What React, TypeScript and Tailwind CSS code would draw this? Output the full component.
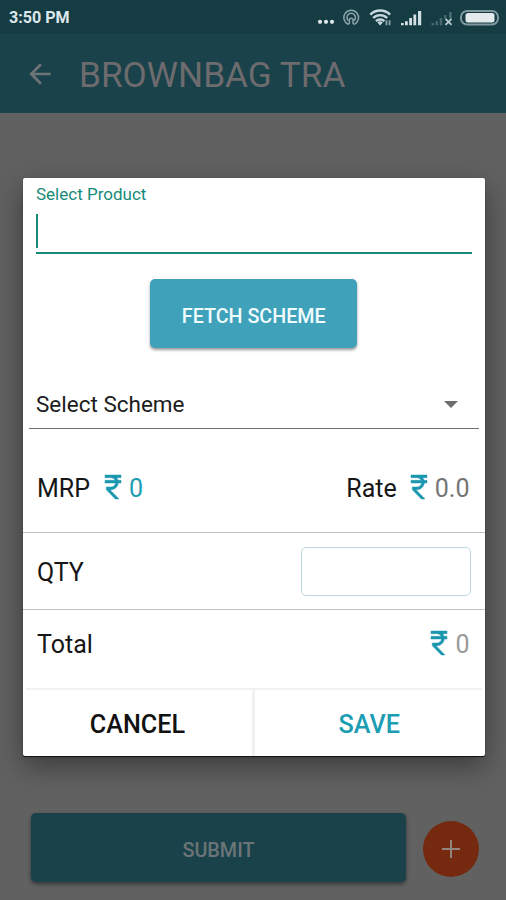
import { useState } from 'react';
import { MdArrowBack } from 'react-icons/md';

function StatusIcons() {
  return (
    <svg width="184" height="36" viewBox="316 0 184 36" fill="none">
      <g fill="#dbe7ea">
        <circle cx="320" cy="22.8" r="2.1" />
        <circle cx="326" cy="22.8" r="2.1" />
        <circle cx="332" cy="22.8" r="2.1" />
      </g>
      {/* hotspot */}
      <g stroke="#8ba5ab" strokeWidth="1.5" transform="translate(0 1)">
        <path d="M348 24.2a7.4 7.4 0 1 1 6.4 0" />
        <path d="M348.4 20.6a4.2 4.2 0 1 1 5.6 0" />
        <path d="M348.2 24.6l1.2-1.6v-3a1.8 1.8 0 0 1 3.6 0v3l1.2 1.6" />
      </g>
      {/* wifi */}
      <g stroke="#c9d8dc" strokeWidth="2.4">
        <path d="M370.3 15.6a14 14 0 0 1 19.8 0" />
        <path d="M373.2 19a10 10 0 0 1 14 0" />
        <path d="M376 22.2a6 6 0 0 1 8.4 0" />
      </g>
      <path d="M377.4 23.6a4 4 0 0 1 5.4 0l-2.7 2.8z" fill="#c9d8dc" />
      <path d="M386.5 21.2v5M389.6 21.2v5" stroke="#8ba5ab" strokeWidth="1.8" />
      {/* sim 1 */}
      <g fill="#d3e0e3">
        <path d="M401 24h2.7v2.3H401zM405 22.3h2.8v4H405zM409.2 19h2.8v7.3h-2.8zM413.4 15.4h2.8v10.9h-2.8zM418 12h3.2v14.3H418z" />
      </g>
      {/* sim 2, no signal */}
      <g fill="#47686f">
        <path d="M431.5 24h2.5v2.3h-2.5zM435.5 22.3h2.5v4h-2.5zM439.7 19h2.5v7.3h-2.5zM444 16h2.3v3.6H444zM449 13h2.8v6.6H449z" />
      </g>
      <path d="m445.5 19.8 6 6m0-6-6 6" stroke="#b9cbd0" strokeWidth="1.8" />
      {/* battery */}
      <rect x="461" y="12" width="37" height="13.5" rx="6" stroke="#7f999f" strokeWidth="2" />
      <rect x="465.5" y="14" width="29" height="9.5" rx="2.5" fill="#e3eaec" />
    </svg>
  );
}

function Rupee({ className = '' }: { className?: string }) {
  return (
    <svg
      viewBox="0 0 24 24"
      fill="currentColor"
      stroke="currentColor"
      strokeWidth="0.35"
      className={`w-8 h-8 shrink-0 text-[#1b97b0] ${className}`}
    >
      <path d="M13.66 7c-.56-1.18-1.76-2-3.16-2H6V3h12v2h-3.26c.48.58.84 1.26 1.05 2H18v2h-2.02c-.25 2.8-2.61 5-5.48 5h-.73l6.73 7h-2.77L7 14v-2h3.5c1.76 0 3.22-1.3 3.46-3H6V7h7.66z" />
    </svg>
  );
}

export default function App() {
  const [product, setProduct] = useState('');
  const [qty, setQty] = useState('');

  return (
    <div className="relative w-[506px] h-[900px] overflow-hidden flex flex-col bg-[#616161] font-['Roboto',sans-serif]">
      <div className="h-[34px] shrink-0 bg-[#163c43] flex items-center justify-between pl-[9px] pr-1.5">
        <span className="text-[16.1px] font-bold text-[#dce8eb] pt-[3px]">3:50 PM</span>
        <StatusIcons />
      </div>
      <header className="h-[79px] shrink-0 bg-[#19424b] flex items-center pl-6">
        <MdArrowBack className="w-8 h-8 text-[#6f7476]" />
        <h1 className="ml-[23px] mt-0.5 text-[35.2px] leading-[50px] text-[#6d6b6d] whitespace-nowrap">BROWNBAG TRA</h1>
      </header>

      <div className="mt-auto mb-[18px] flex items-center pl-[31px]">
        <button className="w-[375px] h-[69px] rounded-[5px] bg-[#19424b] text-[19.8px] font-medium text-[#6b7577] pt-1.5 shadow-[0_2px_4px_rgba(0,0,0,0.45)]">
          SUBMIT
        </button>
        <button className="ml-[17px] mt-[3px] w-14 h-14 rounded-full bg-[#75290f] flex items-center justify-center">
          <svg width="18" height="18" viewBox="0 0 18 18" stroke="#93847e" strokeWidth="2">
            <path d="M9 0v18M0 9h18" />
          </svg>
        </button>
      </div>

      {/* dialog */}
      <div className="absolute inset-x-0 top-[178px] flex pl-[23px]">
        <div className="w-[461.5px] h-[578px] bg-white rounded-[2px] flex flex-col shadow-[0_1px_1px_#111,0_10px_28px_rgba(0,0,0,0.4)]">
          <label className="h-[101px] px-[13px] pt-1 flex flex-col">
            <span className="text-[17px] leading-6 text-[#178a78]">Select Product</span>
            <span className="mt-2 h-[40px] flex border-b-2 border-[#178a78]">
              <span className="w-0.5 h-[34px] bg-[#178a78]" />
              <input
                value={product}
                onChange={(e) => setProduct(e.target.value)}
                className="flex-1 outline-none text-[22px]"
              />
            </span>
          </label>

          <button className="self-center w-[207px] h-[69px] shrink-0 rounded-[5px] bg-[#3fa2ba] text-[19.7px] font-medium text-[#f0fbfd] pt-1.5 shadow-[0_2px_3px_rgba(0,0,0,0.4)]">
            FETCH SCHEME
          </button>

          <div className="mt-[32px] mx-1.5 h-[49px] border-b border-[#6f6f6f] flex items-center justify-between pl-[7px] pr-[21px]">
            <span className="text-[22.5px] pt-0.5 text-[#1c1c1c]">Select Scheme</span>
            <svg width="14" height="7" viewBox="0 0 14 7" fill="#6d6d6d">
              <path d="M0 0h14L7 7z" />
            </svg>
          </div>

          <div className="h-[104px] pt-[16px] pl-[14px] pr-[15px] flex items-center justify-between text-[25px] text-[#161616] border-b border-[#c4c4c4]">
            <div className="flex items-center">
              MRP
              <Rupee className="ml-[7px] mb-1" />
              <span className="text-[#1b9db3]">0</span>
            </div>
            <div className="flex items-center">
              Rate
              <Rupee className="ml-[6px] mb-1" />
              <span className="text-[#757575]">0.0</span>
            </div>
          </div>

          <div className="h-[77px] pl-[14px] pr-[14px] flex items-center justify-between border-b border-[#c4c4c4]">
            <span className="text-[25px] pt-1 text-[#161616]">QTY</span>
            <input
              value={qty}
              onChange={(e) => setQty(e.target.value)}
              className="w-[170px] h-[49px] rounded-[5px] border border-[#bcd9dd] outline-none px-3 text-right text-[24px]"
            />
          </div>

          <div className="h-[78px] pb-2 pl-[14px] pr-[15px] flex items-center justify-between text-[25px] text-[#161616]">
            Total
            <div className="flex items-center">
              <Rupee className="mb-1" />
              <span className="text-[#9a9a9a]">0</span>
            </div>
          </div>

          <div className="flex-1 mx-[3px] flex border-t-2 border-[#f1f1f1] text-[25.2px] font-medium">
            <button className="w-[226px] pt-[3px] pr-[3px] text-[#111]">CANCEL</button>
            <button className="flex-1 pt-[3px] pl-0.5 border-l-[3px] border-[#f1f1f1] text-[#1b9db3]">SAVE</button>
          </div>
        </div>
      </div>
    </div>
  );
}
